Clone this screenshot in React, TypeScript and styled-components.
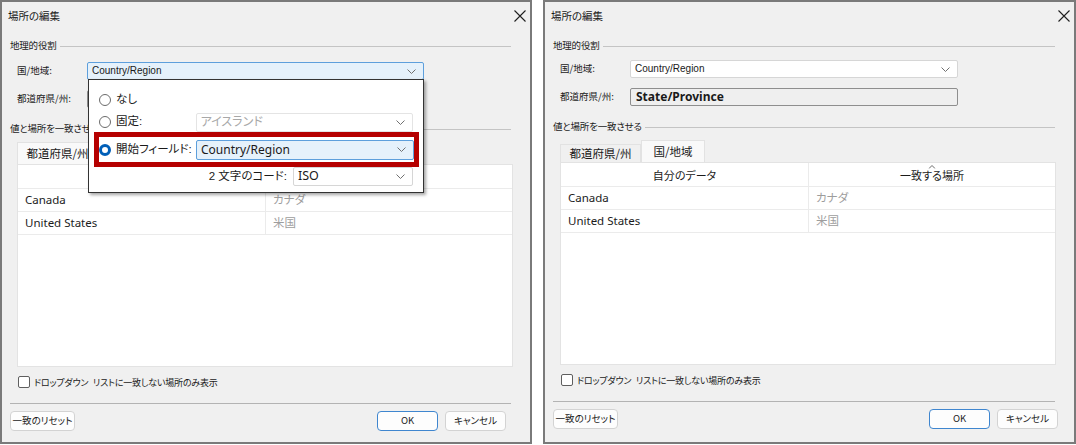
import React from 'react';
import styled, { createGlobalStyle } from 'styled-components';

const GlobalStyle = createGlobalStyle`
  html, body {
    margin: 0;
    padding: 0;
    background: #ffffff;
  }
  body {
    font-family: "Noto Sans CJK JP", "Noto Sans", sans-serif;
    font-feature-settings: "palt";
    color: #1a1a1a;
  }
`;

const UI_FONT = `"Noto Sans CJK JP", "Noto Sans", sans-serif`;
const LATIN_FONT = `"Noto Sans", "Noto Sans CJK JP", sans-serif`;
const NARROW_FONT = `"Liberation Sans", "Noto Sans CJK JP", sans-serif`;

const Page = styled.div`
  display: flex;
  gap: 11px;
  width: 1076px;
  height: 445px;
  background: #ffffff;
`;

const Dialog = styled.section<{ $width: number }>`
  box-sizing: border-box;
  width: ${({ $width }) => $width}px;
  height: 444px;
  border: 2px solid #7a7a7a;
  background: #f0f0f0;
  display: flex;
  flex-direction: column;
`;

const TitleBar = styled.header`
  display: flex;
  align-items: center;
  justify-content: space-between;
  height: 28px;
  padding: 0 4px 0 6px;
  font-size: 10.5px;
  line-height: 1;
`;

const Body = styled.div`
  display: flex;
  flex-direction: column;
  padding: 0 19px 0 8px;
`;

const GroupHeader = styled.div<{ $top: number }>`
  display: flex;
  align-items: center;
  height: 12px;
  margin-top: ${({ $top }) => $top}px;
  font-size: 9.5px;
  letter-spacing: -0.2px;
  line-height: 1;
  &::after {
    content: '';
    flex: 1;
    height: 1px;
    margin-left: 3px;
    background: #c4c4c4;
  }
`;

const FieldRow = styled.div<{ $top: number }>`
  display: flex;
  align-items: center;
  height: 18px;
  margin-top: ${({ $top }) => $top}px;
  padding-left: 7px;
`;

const FieldLabel = styled.span`
  width: 70px;
  font-size: 9.5px;
  line-height: 1;
`;

type ComboTone = 'plain' | 'open' | 'disabled' | 'active';

const comboBorder: Record<ComboTone, string> = {
  plain: '#d6d6d6',
  open: '#5d9fdc',
  disabled: '#e4e4e4',
  active: '#5d9fdc'
};

const comboBg: Record<ComboTone, string> = {
  plain: '#ffffff',
  open: '#e5f1fb',
  disabled: '#ffffff',
  active: '#e5f1fb'
};

const ComboBox = styled.div<{ $tone: ComboTone; $width: number; $height: number; $size: number; $narrow?: boolean }>`
  position: relative;
  box-sizing: border-box;
  display: flex;
  align-items: center;
  justify-content: space-between;
  width: ${({ $width }) => $width}px;
  height: ${({ $height }) => $height}px;
  padding: 0 7px 0 4px;
  border: 1px solid ${({ $tone }) => comboBorder[$tone]};
  border-radius: 2px;
  background: ${({ $tone }) => comboBg[$tone]};
  color: ${({ $tone }) => ($tone === 'disabled' ? '#a8a8a8' : '#1a1a1a')};
  font-family: ${({ $narrow }) => ($narrow ? NARROW_FONT : LATIN_FONT)};
  font-size: ${({ $size }) => $size}px;
  line-height: 1;
`;

const ReadOnlyBox = styled.div<{ $width: number }>`
  box-sizing: border-box;
  display: flex;
  align-items: center;
  width: ${({ $width }) => $width}px;
  height: 18px;
  padding-left: 5px;
  border: 1px solid #8e8e8e;
  border-radius: 2px;
  background: #efefef;
  font-family: ${LATIN_FONT};
  font-weight: 700;
  font-size: 12px;
  line-height: 1;
`;

const DropPanel = styled.div`
  position: absolute;
  top: 100%;
  left: 0;
  z-index: 10;
  box-sizing: border-box;
  width: calc(100% + 1px);
  padding: 7px 10px 6px 10px;
  border: 1px solid #333333;
  background: #ffffff;
  box-shadow: 2px 2px 3px rgba(0, 0, 0, 0.35);
`;

const OptionRow = styled.div<{ $height: number; $highlight?: boolean; $alignEnd?: boolean }>`
  display: flex;
  align-items: center;
  justify-content: ${({ $alignEnd }) => ($alignEnd ? 'flex-end' : 'flex-start')};
  height: ${({ $height }) => $height}px;
  margin: ${({ $highlight }) => ($highlight ? '0 -6px 0 -5px' : '0')};
  border: ${({ $highlight }) => ($highlight ? '5px solid #b50000' : 'none')};
  box-sizing: border-box;
  font-size: 11.5px;
  line-height: 1;
`;

const OptionLabel = styled.span`
  display: flex;
  align-items: center;
  gap: 5px;
  width: 97px;
`;

const CodeLabel = styled.span`
  margin-right: 6px;
`;

const Radio = styled.span<{ $checked?: boolean }>`
  box-sizing: border-box;
  width: 12px;
  height: 12px;
  border-radius: 50%;
  border: ${({ $checked }) => ($checked ? '3.5px solid #005fb8' : '1px solid #6b6b6b')};
  background: #ffffff;
`;

const TabStrip = styled.div`
  display: flex;
  align-items: flex-end;
  height: 22px;
  margin-top: 7px;
  padding-left: 7px;
`;

const Tab = styled.div<{ $active?: boolean; $width: number }>`
  box-sizing: border-box;
  display: flex;
  align-items: center;
  justify-content: center;
  width: ${({ $width }) => $width}px;
  height: ${({ $active }) => ($active ? 22 : 18)}px;
  border: 1px solid #e2e2e2;
  border-bottom: none;
  background: ${({ $active }) => ($active ? '#f9f9f9' : '#f0f0f0')};
  font-size: 11.5px;
  line-height: 1;
`;

const Grid = styled.div`
  box-sizing: border-box;
  width: 496px;
  height: 203px;
  margin-left: 7px;
  border: 1px solid #e3e3e3;
  background: #ffffff;
`;

const GridRow = styled.div<{ $header?: boolean }>`
  display: grid;
  grid-template-columns: 248px 1fr;
  height: ${({ $header }) => ($header ? 23 : 22)}px;
  border-bottom: 1px solid #ebebeb;
`;

const GridCell = styled.div<{ $muted?: boolean; $header?: boolean }>`
  position: relative;
  display: flex;
  align-items: center;
  justify-content: ${({ $header }) => ($header ? 'center' : 'flex-start')};
  padding-left: ${({ $header }) => ($header ? 0 : 7)}px;
  padding-top: ${({ $header }) => ($header ? 2 : 0)}px;
  border-right: 1px solid #ebebeb;
  color: ${({ $muted }) => ($muted ? '#9d9d9d' : '#1b1b1b')};
  font-family: ${({ $header }) => ($header ? UI_FONT : LATIN_FONT)};
  font-size: ${({ $header }) => ($header ? 11 : 11.5)}px;
  line-height: 1;
  &:last-child {
    border-right: none;
  }
`;

const SortCaret = styled.svg`
  position: absolute;
  top: 2px;
  left: 50%;
  transform: translateX(-50%);
`;

const CheckRow = styled.label`
  display: flex;
  align-items: center;
  gap: 4px;
  height: 16px;
  margin-top: 7px;
  padding-left: 8px;
  font-size: 9px;
  letter-spacing: -0.2px;
  word-spacing: 3px;
  line-height: 1;
`;

const CheckBox = styled.span`
  box-sizing: border-box;
  width: 12px;
  height: 12px;
  border: 1px solid #5f5f5f;
  border-radius: 2px;
  background: #ffffff;
`;

const Separator = styled.hr`
  width: 100%;
  height: 1px;
  margin: 13px 0 0;
  border: none;
  background: #b3b3b3;
`;

const Footer = styled.div<{ $inset: number }>`
  display: flex;
  align-items: center;
  gap: 7px;
  margin: 7px ${({ $inset }) => $inset}px 0 0;
`;

const Spacer = styled.div`
  flex: 1;
`;

const Button = styled.button<{ $primary?: boolean; $width: number }>`
  box-sizing: border-box;
  width: ${({ $width }) => $width}px;
  height: 20px;
  padding: 0;
  border: 1px solid ${({ $primary }) => ($primary ? '#3f86cf' : '#d3d3d3')};
  border-radius: 4px;
  background: #fdfdfd;
  color: #1a1a1a;
  font-family: ${UI_FONT};
  font-feature-settings: "palt";
  font-size: 9.5px;
  line-height: 1;
`;

const Chevron: React.FC = () => (
  <svg width="9" height="5" viewBox="0 0 9 5">
    <polyline points="0.5,0.5 4.5,4.5 8.5,0.5" fill="none" stroke="#707070" strokeWidth="1" />
  </svg>
);

const CloseIcon: React.FC = () => (
  <svg width="12" height="12" viewBox="0 0 12 12">
    <path d="M0.5 0.5 L11.5 11.5 M11.5 0.5 L0.5 11.5" stroke="#1f1f1f" strokeWidth="1.1" />
  </svg>
);

const Combo: React.FC<{
  tone?: ComboTone;
  width: number;
  height?: number;
  size?: number;
  children?: React.ReactNode;
}> = ({ tone = 'plain', width, height = 18, size = 10, children }) => (
  <ComboBox $tone={tone} $width={width} $height={height} $size={size}>
    <span>{children}</span>
    <Chevron />
  </ComboBox>
);

const RoleDropdown: React.FC = () => (
  <DropPanel>
    <OptionRow $height={25}>
      <OptionLabel>
        <Radio />
        なし
      </OptionLabel>
    </OptionRow>
    <OptionRow $height={20}>
      <OptionLabel>
        <Radio />
        固定:
      </OptionLabel>
      <Combo tone="disabled" width={218} height={19} size={12}>
        アイスランド
      </Combo>
    </OptionRow>
    <OptionRow $height={35} $highlight>
      <OptionLabel>
        <Radio $checked />
        開始フィールド:
      </OptionLabel>
      <Combo tone="active" width={218} height={20} size={12}>
        Country/Region
      </Combo>
    </OptionRow>
    <OptionRow $height={19} $alignEnd>
      <CodeLabel>2 文字のコード:</CodeLabel>
      <Combo width={120} height={19} size={12.5}>
        ISO
      </Combo>
    </OptionRow>
  </DropPanel>
);

const rows = [
  { mine: 'Canada', match: 'カナダ' },
  { mine: 'United States', match: '米国' }
];

interface PlaceDialogProps {
  width: number;
  comboWidth: number;
  footerInset: number;
  fieldTop: number;
  activeTab: number;
  open?: boolean;
}

const PlaceDialog: React.FC<PlaceDialogProps> = ({ width, comboWidth, footerInset, fieldTop, activeTab, open }) => (
  <Dialog $width={width}>
    <TitleBar>
      <span>場所の編集</span>
      <CloseIcon />
    </TitleBar>
    <Body>
      <GroupHeader $top={10}>地理的役割</GroupHeader>
      <FieldRow $top={fieldTop}>
        <FieldLabel>国/地域:</FieldLabel>
        <ComboBox $tone={open ? 'open' : 'plain'} $width={comboWidth} $height={18} $size={10} $narrow>
          <span>Country/Region</span>
          <Chevron />
          {open && <RoleDropdown />}
        </ComboBox>
      </FieldRow>
      <FieldRow $top={10}>
        <FieldLabel>都道府県/州:</FieldLabel>
        <ReadOnlyBox $width={comboWidth}>State/Province</ReadOnlyBox>
      </FieldRow>
      <GroupHeader $top={15}>値と場所を一致させる</GroupHeader>
      <TabStrip>
        <Tab $width={81} $active={activeTab === 0}>
          都道府県/州
        </Tab>
        <Tab $width={64} $active={activeTab === 1}>
          国/地域
        </Tab>
      </TabStrip>
      <Grid>
        <GridRow $header>
          <GridCell $header>自分のデータ</GridCell>
          <GridCell $header>
            <SortCaret width="7" height="4" viewBox="0 0 7 4">
              <polyline points="0.5,3.5 3.5,0.5 6.5,3.5" fill="none" stroke="#6a6a6a" strokeWidth="1" />
            </SortCaret>
            一致する場所
          </GridCell>
        </GridRow>
        {rows.map((r) => (
          <GridRow key={r.mine}>
            <GridCell>{r.mine}</GridCell>
            <GridCell $muted>{r.match}</GridCell>
          </GridRow>
        ))}
      </Grid>
      <CheckRow>
        <CheckBox />
        ドロップダウン リストに一致しない場所のみ表示
      </CheckRow>
      <Separator />
      <Footer $inset={footerInset}>
        <Button $width={65}>一致のリセット</Button>
        <Spacer />
        <Button $primary $width={61}>
          OK
        </Button>
        <Button $width={61}>キャンセル</Button>
      </Footer>
    </Body>
  </Dialog>
);

const App: React.FC = () => (
  <>
    <GlobalStyle />
    <Page>
      <PlaceDialog width={532} comboWidth={337} footerInset={5} fieldTop={10} activeTab={0} open />
      <PlaceDialog width={533} comboWidth={328} footerInset={-3} fieldTop={8} activeTab={1} />
    </Page>
  </>
);

export default App;
